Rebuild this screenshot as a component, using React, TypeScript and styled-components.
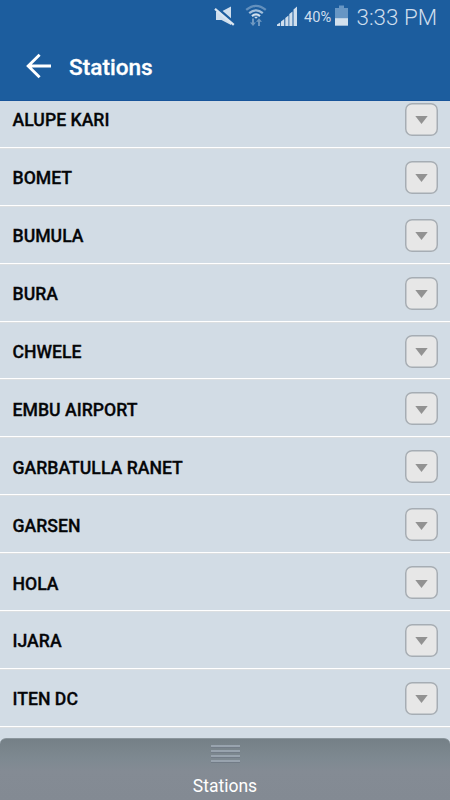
import React from "react";
import styled, { createGlobalStyle } from "styled-components";

const GlobalStyle = createGlobalStyle`
  * { box-sizing: border-box; }
  body { margin: 0; background: #d2dce5; }
`;

const Screen = styled.div`
  width: 450px;
  height: 800px;
  display: flex;
  flex-direction: column;
  overflow: hidden;
  background: #d2dce5;
  font-family: Roboto, "Liberation Sans", sans-serif;
`;

const StatusBar = styled.div`
  flex: none;
  height: 35px;
  display: flex;
  align-items: flex-start;
  justify-content: flex-end;
  padding-right: 13px;
  background: #1c5d9e;
  color: #cfdeed;
`;

const StatusIcon = styled.svg<{ $gap: number }>`
  display: block;
  flex: none;
  height: 35px;
  margin-right: ${(p) => p.$gap}px;
`;

const BatteryText = styled.span`
  width: 28px;
  margin-right: 3px;
  font-size: 14.7px;
  line-height: 34px;
  white-space: nowrap;
`;

const Clock = styled.span`
  width: 80.5px;
  font-size: 22.4px;
  font-weight: 300;
  line-height: 35px;
  white-space: nowrap;
`;

const AppBar = styled.header`
  flex: none;
  height: 66px;
  display: flex;
  align-items: center;
  padding-left: 26px;
  background: #1c5d9e;
  border-bottom: 1px solid #17549a;
  color: #fff;
`;

const BackButton = styled.button`
  width: 43px;
  height: 26px;
  margin-bottom: 3px;
  padding: 0;
  border: 0;
  background: none;
  color: inherit;
  text-align: left;
  svg { display: block; }
`;

const Title = styled.h1`
  margin: 1px 0 0;
  font-size: 22.6px;
  font-weight: 500;
  line-height: 28px;
  -webkit-text-stroke: 0.3px currentColor;
`;

const List = styled.ul`
  flex: 1;
  min-height: 0;
  margin: 0;
  padding: 0;
  overflow: hidden;
  list-style: none;
`;

const Row = styled.li`
  height: 57.9px;
  display: flex;
  align-items: center;
  justify-content: space-between;
  padding: 2px 12px 0 12.5px;
  border-bottom: 1px solid #fff;
  box-shadow: 0 1px 0 #dcdfe1;
  &:first-child { margin-top: -11px; }
`;

const StationName = styled.span`
  margin-top: 2px;
  font-size: 17.65px;
  font-weight: 500;
  line-height: 24px;
  color: #050608;
  -webkit-text-stroke: 0.3px currentColor;
`;

const ExpandButton = styled.button`
  width: 33px;
  height: 33px;
  display: flex;
  align-items: center;
  justify-content: center;
  padding: 0;
  border: 0;
  border-radius: 7px;
  background: #e7e7e7;
  box-shadow: inset 0 0 0 1.5px #a6adb4;
  svg { display: block; margin-top: 2px; }
`;

const Drawer = styled.footer`
  flex: none;
  height: 62px;
  display: flex;
  flex-direction: column;
  align-items: center;
  padding-top: 6px;
  border-top: 1px solid #8b969d;
  border-radius: 6px 6px 0 0;
  background: linear-gradient(#758087 0, #7e8991 20px, #848b94 32px, #838a93 100%);
  color: #fff;
`;

const Grip = styled.div`
  width: 29px;
  height: 18px;
  display: flex;
  flex-direction: column;
  gap: 2px;
`;

const GripLine = styled.div`
  flex: none;
  height: 3px;
  background: linear-gradient(#98a3ae 0 2px, #727c87 2px);
`;

const DrawerLabel = styled.span`
  margin-top: 11px;
  font-size: 17.5px;
  line-height: 24px;
`;

const stations = [
  "ALUPE KARI", "BOMET", "BUMULA", "BURA", "CHWELE", "EMBU AIRPORT",
  "GARBATULLA RANET", "GARSEN", "HOLA", "IJARA", "ITEN DC",
];

const MuteIcon = () => (
  <StatusIcon $gap={10} width="21" viewBox="215 0 21 35">
    <path d="M217 11.5h5.5l9.5-5v18.5l-9.5-5h-5.5z" fill="#cfdeed" />
    <path d="M217 7.2L235.5 23.2" stroke="#1c5d9e" strokeWidth="3" />
    <path d="M216 8.8L234.8 24.8" stroke="#dbe6f1" strokeWidth="2.2" />
  </StatusIcon>
);

const WifiIcon = () => (
  <StatusIcon $gap={10} width="22" viewBox="246 0 22 35">
    <g fill="none" strokeWidth="2.2">
      <path d="M247.2 9.9Q257 1.7 266.8 9.9" stroke="#6390bd" />
      <path d="M250.2 13.2Q257 7.4 263.8 13.2" stroke="#a3bfdb" />
      <path d="M253 16.2Q257 12.7 261 16.2" stroke="#d3e1ee" />
    </g>
    <path d="M255 16.8h4l-2 2z" fill="#d3e1ee" />
    <path d="M253 18.5h2v4h2l-3 3.5-3-3.5h2zM259 26h2v-4.2h2l-3-3.6-3 3.6h2z" fill="#6e98c1" />
  </StatusIcon>
);

const SignalIcon = () => (
  <StatusIcon $gap={7} width="20" viewBox="277 0 20 35">
    <path d="M277 26v-1.5l3.2-2v3.5zM281 26v-4.5l3.3-2.5v7zM285.3 26v-8l3.2-2.5v10.5zM289.3 26v-12l3.2-2.5v14.5zM293.5 26v-16.5l3.5-3v19.5z" fill="#cfdeed" />
  </StatusIcon>
);

const BatteryIcon = () => (
  <StatusIcon $gap={8.5} width="13" viewBox="335 0 13 35">
    <path d="M335 8h4v-2.5h5v2.5h4v17.5h-13z" fill="#6796c4" />
    <path d="M335 18.2h13v7.4h-13z" fill="#d2e0ed" />
  </StatusIcon>
);

export default function App() {
  return (
    <>
      <GlobalStyle />
      <Screen>
        <StatusBar>
          <MuteIcon />
          <WifiIcon />
          <SignalIcon />
          <BatteryText>40%</BatteryText>
          <BatteryIcon />
          <Clock>3:33 PM</Clock>
        </StatusBar>
        <AppBar>
          <BackButton aria-label="Back">
            <svg width="26" height="26" viewBox="0 0 26 26" fill="none" stroke="#fff" strokeWidth="2.9">
              <path d="M25 13H2.5M13.6 1.8L2.2 13l11.4 11.2" />
            </svg>
          </BackButton>
          <Title>Stations</Title>
        </AppBar>
        <List>
          {stations.map((name) => (
            <Row key={name}>
              <StationName>{name}</StationName>
              <ExpandButton aria-label={`Expand ${name}`}>
                <svg width="13" height="8" viewBox="0 0 13 8">
                  <path d="M0.3 0h12.4L6.5 8z" fill="#929292" />
                </svg>
              </ExpandButton>
            </Row>
          ))}
        </List>
        <Drawer>
          <Grip>
            <GripLine />
            <GripLine />
            <GripLine />
            <GripLine />
          </Grip>
          <DrawerLabel>Stations</DrawerLabel>
        </Drawer>
      </Screen>
    </>
  );
}
